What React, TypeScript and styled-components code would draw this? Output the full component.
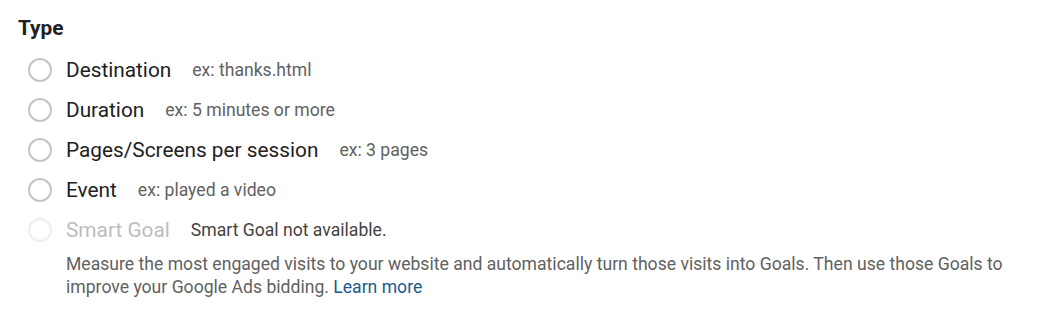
import styled, { createGlobalStyle } from 'styled-components';

const GlobalStyle = createGlobalStyle`
  body {
    margin: 0;
    background: #ffffff;
    font-family: Roboto, "Liberation Sans", sans-serif;
  }
`;

interface IGoalType {
  label: string;
  hint: string;
  disabled?: boolean;
}

const goalTypes: IGoalType[] = [
  { label: 'Destination', hint: 'ex: thanks.html' },
  { label: 'Duration', hint: 'ex: 5 minutes or more' },
  { label: 'Pages/Screens per session', hint: 'ex: 3 pages' },
  { label: 'Event', hint: 'ex: played a video' },
  { label: 'Smart Goal', hint: 'Smart Goal not available.', disabled: true },
];

const App = () => {
  return (
    <>
      <GlobalStyle />
      <Container>
        <Title>Type</Title>
        <OptionList>
          {goalTypes.map((type) => (
            <OptionRow key={type.label}>
              <Radio $disabled={type.disabled} />
              <Label $disabled={type.disabled}>{type.label}</Label>
              <Hint $disabled={type.disabled}>{type.hint}</Hint>
            </OptionRow>
          ))}
        </OptionList>
        <Description>
          Measure the most engaged visits to your website and automatically turn those visits into Goals. Then use
          those Goals to improve your Google Ads bidding. <Link href='#'>Learn more</Link>
        </Description>
      </Container>
    </>
  );
};

export default App;

const Container = styled.div`
  padding: 16px 18px 0 18px;
  width: 1045px;
  box-sizing: border-box;
`;

const Title = styled.h3`
  margin: 0;
  font-weight: 700;
  font-size: 20.8px;
  line-height: 24px;
  color: #212121;
`;

const OptionList = styled.div`
  display: flex;
  flex-direction: column;
  margin-top: 10px;
  padding-left: 10px;
`;

const OptionRow = styled.label`
  display: flex;
  align-items: center;
  height: 40px;
`;

const Radio = styled.span<{ $disabled?: boolean }>`
  width: 24px;
  height: 24px;
  box-sizing: border-box;
  border-radius: 50%;
  border: 2px solid ${({ $disabled }) => ($disabled ? '#eeeeee' : '#c4c4c4')};
  margin-right: 14px;
  flex-shrink: 0;
`;

const Label = styled.span<{ $disabled?: boolean }>`
  font-size: 20.8px;
  color: ${({ $disabled }) => ($disabled ? '#bdbdbd' : '#212121')};
  margin-right: 21px;
`;

const Hint = styled.span<{ $disabled?: boolean }>`
  font-size: 17.6px;
  color: ${({ $disabled }) => ($disabled ? '#424242' : '#616161')};
`;

const Description = styled.p`
  margin: 3px 0 0 48px;
  font-size: 17.6px;
  line-height: 23px;
  color: #616161;
  max-width: 960px;
`;

const Link = styled.a`
  color: #1a5a8c;
  text-decoration: none;
`;
